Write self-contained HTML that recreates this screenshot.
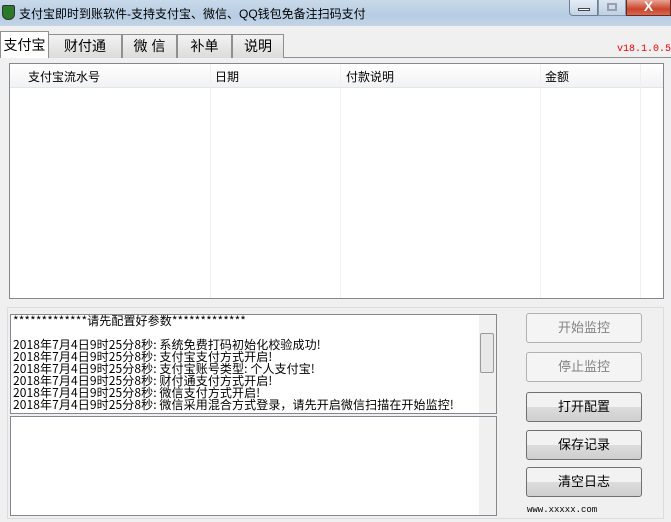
<!DOCTYPE html>
<html><head><meta charset="utf-8"><style>
*{box-sizing:border-box;margin:0;padding:0}
body{width:671px;height:522px;overflow:hidden;background:#f0f0f0;font-family:"Liberation Sans","Noto Sans CJK SC",sans-serif;font-size:12px;position:relative;color:#000}
.abs{position:absolute}
.title{left:0;top:0;width:671px;height:26px;background:linear-gradient(#c9d9ea,#b7cde3 60%,#c3d4e6);}
.tab{position:absolute;top:34px;height:24px;border:1px solid #8e8f8f;border-bottom:none;background:linear-gradient(#f2f2f2,#dcdcdc);font-size:14px;text-align:center;line-height:23px}
.btn{position:absolute;left:526px;width:116px;height:30px;border:1px solid #707070;border-radius:3px;background:linear-gradient(#f2f2f2 50%,#dddddd 50%,#cfcfcf);font-size:13px;text-align:center;line-height:28px}
.btn.dis{border-color:#adb2b5;background:#f4f4f4;color:#838383}
.box{position:absolute;left:10px;width:487px;background:#fff;border:1px solid #828790}
.sb{position:absolute;right:0;top:0;bottom:0;width:17px;background:#f0f0f0}
.log{font-family:"WenQuanYi Zen Hei","Noto Sans CJK SC",sans-serif;font-size:12px;line-height:12px;white-space:pre;padding-left:2px;letter-spacing:0.1px}
</style></head><body>
<div class="abs title"></div>
<div class="abs" style="left:2px;top:5px;width:13px;height:15px;background:#2a7a2a;border:1px solid #333;border-radius:2px 2px 6px 6px"></div>
<div class="abs" style="left:19px;top:5px;font-size:12px">支付宝即时到账软件-支持支付宝、微信、QQ钱包免备注扫码支付</div>
<div class="abs" style="left:569px;top:0;width:29px;height:16px;border:1px solid #6e7d90;border-top:none;border-radius:0 0 0 4px;background:linear-gradient(#e4edf6,#c3d3e4)"><div style="margin:8px auto 0;width:12px;height:3px;background:#fff;border:1px solid #445"></div></div>
<div class="abs" style="left:598px;top:0;width:28px;height:16px;border:1px solid #6e7d90;border-top:none;background:linear-gradient(#e4edf6,#c3d3e4);opacity:.7"><div style="margin:3px auto 0;width:10px;height:8px;border:2px solid #889"></div></div>
<div class="abs" style="left:626px;top:0;width:45px;height:16px;border:1px solid #6b2a20;border-top:none;background:linear-gradient(#e8a595,#c8452c 60%,#d66a50);color:#fff;font-weight:bold;font-size:14px;text-align:center;line-height:12px">X</div>
<div class="abs" style="left:0;top:57px;width:671px;height:1px;background:#8e8f8f"></div>
<div class="tab" style="left:48px;width:74px">财付通</div>
<div class="tab" style="left:122px;width:55px">微 信</div>
<div class="tab" style="left:177px;width:55px">补单</div>
<div class="tab" style="left:232px;width:52px">说明</div>
<div class="tab" style="left:0;top:31px;width:49px;height:27px;background:#fff;z-index:2;line-height:27px">支付宝</div>
<div class="abs" style="left:617px;top:44px;color:#e00;font-family:'Liberation Mono',monospace;font-size:10px">v18.1.0.5</div>
<div class="abs" style="left:9px;top:63px;width:655px;height:236px;background:#fff;border:1px solid #828790"></div>
<div class="abs" style="left:10px;top:64px;width:653px;height:24px;background:linear-gradient(#fff,#f1f2f4);border-bottom:1px solid #e5e5e5"></div>
<div class="abs" style="left:28px;top:68px;font-size:12px">支付宝流水号</div>
<div class="abs" style="left:215px;top:68px">日期</div>
<div class="abs" style="left:346px;top:68px">付款说明</div>
<div class="abs" style="left:545px;top:68px">金额</div>
<div class="abs" style="left:210px;top:64px;width:1px;height:234px;background:#efefef"></div>
<div class="abs" style="left:340px;top:64px;width:1px;height:234px;background:#efefef"></div>
<div class="abs" style="left:540px;top:64px;width:1px;height:234px;background:#efefef"></div>
<div class="abs" style="left:640px;top:64px;width:1px;height:234px;background:#efefef"></div>
<div class="abs" style="left:7px;top:307px;width:657px;height:212px;border:1px solid #dcdcdc"></div>
<div class="box" style="top:314px;height:100px"><div class="sb"><div style="position:absolute;top:18px;left:1px;width:14px;height:40px;border:1px solid #999;border-radius:2px;background:#e8e8e8"></div></div>
<div class="log">*************请先配置好参数*************

2018年7月4日9时25分8秒: 系统免费打码初始化校验成功!
2018年7月4日9时25分8秒: 支付宝支付方式开启!
2018年7月4日9时25分8秒: 支付宝账号类型: 个人支付宝!
2018年7月4日9时25分8秒: 财付通支付方式开启!
2018年7月4日9时25分8秒: 微信支付方式开启!
2018年7月4日9时25分8秒: 微信采用混合方式登录，请先开启微信扫描在开始监控!</div></div>
<div class="box" style="top:416px;height:100px"><div class="sb"></div></div>
<div class="btn dis" style="top:313px">开始监控</div>
<div class="btn dis" style="top:352px">停止监控</div>
<div class="btn" style="top:392px">打开配置</div>
<div class="btn" style="top:430px">保存记录</div>
<div class="btn" style="top:467px">清空日志</div>
<div class="abs" style="left:527px;top:505px;font-family:'Liberation Mono',monospace;font-size:9px">www.xxxxx.com</div>
</body></html>
